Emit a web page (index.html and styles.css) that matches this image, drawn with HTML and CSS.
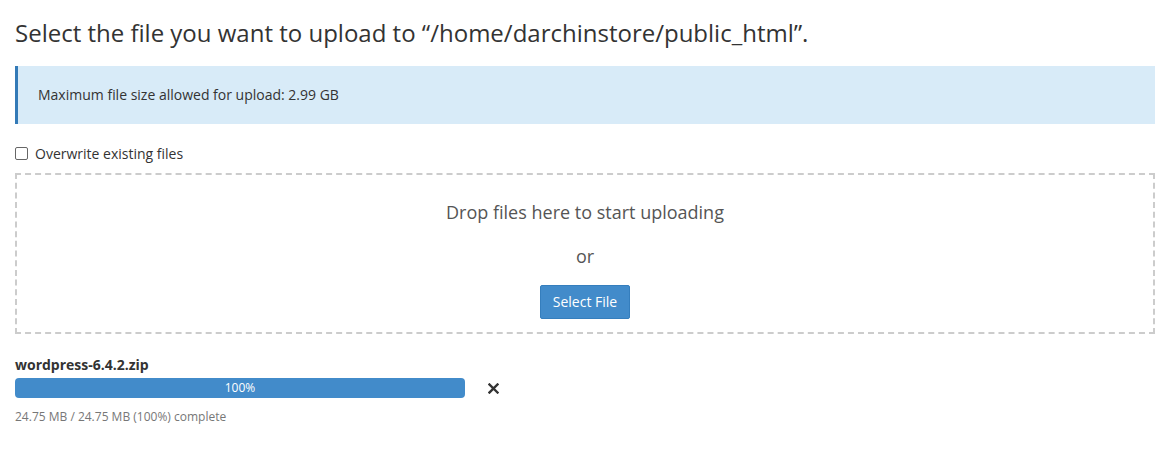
FILE: index.html
```html
<!DOCTYPE html>
<html lang="en">
<head>
    <meta charset="UTF-8">
    <meta name="viewport" content="width=device-width, initial-scale=1.0">
    <title>Upload Files</title>
    <link rel="stylesheet" href="styles.css">
</head>
<body>

    <div class="page">
        <h1 class="title">Select the file you want to upload to “/home/darchinstore/public_html”.</h1>

        <div class="alert">Maximum file size allowed for upload: 2.99 GB</div>

        <label class="overwrite">
            <input type="checkbox" id="overwrite">
            <span class="box"></span>
            Overwrite existing files
        </label>

        <div class="dropzone">
            <div class="drop-text">Drop files here to start uploading</div>
            <div class="or">or</div>
            <button type="button" class="btn">Select File</button>
        </div>

        <div class="upload">
            <div class="file-name">wordpress-6.4.2.zip</div>
            <div class="progress-row">
                <div class="progress">
                    <div class="progress-bar" style="width: 100%">100%</div>
                </div>
                <span class="remove">
                    <svg width="11" height="11" viewBox="0 0 11 11">
                        <path d="M1.5 1.5 L9.5 9.5 M9.5 1.5 L1.5 9.5" stroke="#333" stroke-width="2.4" stroke-linecap="square"/>
                    </svg>
                </span>
            </div>
            <div class="status">24.75 MB / 24.75 MB (100%) complete</div>
        </div>
    </div>

</body>
</html>
```

FILE: styles.css
```css
body {
    font-family: "Open Sans", sans-serif;
    color: #333;
    background-color: #fff;
    margin: 0;
    padding: 0;
}

.page {
    padding: 0 15px;
}

.title {
    font-size: 24px;
    font-weight: 400;
    line-height: 34px;
    margin: 16px 0 16px;
}

.alert {
    background-color: #d8ebf8;
    border-left: 3px solid #337ab7;
    padding: 20px 20px;
    font-size: 14px;
    line-height: 18px;
    color: #333;
}

.overwrite {
    display: flex;
    align-items: center;
    gap: 7px;
    font-size: 14px;
    margin-top: 19px;
    height: 20px;
    cursor: pointer;
}

.overwrite input {
    display: none;
}

.overwrite .box {
    width: 11px;
    height: 11px;
    border: 1px solid #666;
    border-radius: 2px;
}

.dropzone {
    margin-top: 10px;
    border: 2px dashed #ccc;
    height: 161px;
    box-sizing: border-box;
    display: flex;
    flex-direction: column;
    align-items: center;
    padding-top: 24px;
}

.drop-text {
    font-size: 18px;
    color: #555;
    line-height: 26px;
}

.or {
    font-size: 18px;
    color: #555;
    line-height: 26px;
    margin-top: 18px;
}

.btn {
    margin-top: 16px;
    background-color: #428bca;
    border: 1px solid #357ebd;
    color: #fff;
    font-family: "Open Sans", sans-serif;
    font-size: 14px;
    padding: 6px 12px;
    border-radius: 2px;
    line-height: 20px;
    cursor: pointer;
}

.upload {
    margin-top: 21px;
}

.file-name {
    font-size: 14px;
    font-weight: 700;
    line-height: 20px;
}

.progress-row {
    display: flex;
    align-items: center;
    margin-top: 3px;
}

.progress {
    width: 450px;
    height: 20px;
    background-color: #f5f5f5;
    border-radius: 4px;
    overflow: hidden;
}

.progress-bar {
    height: 100%;
    background-color: #428bca;
    color: #fff;
    font-size: 12px;
    line-height: 20px;
    text-align: center;
}

.remove {
    margin-left: 23px;
    display: flex;
}

.status {
    font-size: 12px;
    color: #777;
    margin-top: 10px;
}
```
